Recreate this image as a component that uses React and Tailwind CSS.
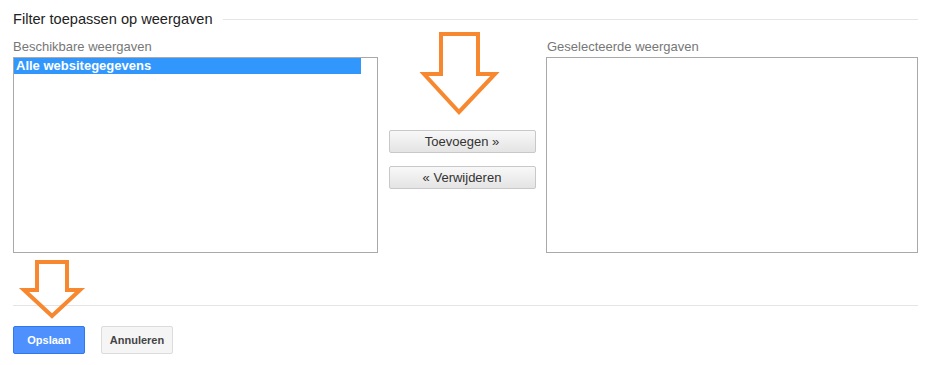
import React from 'react';

const font = { fontFamily: '"Liberation Sans", Arial, sans-serif' };

const Arrow = ({ x1, x2, top, headY, hx1, hx2, tipX, tipY }) => (
  <polygon
    points={`${x1},${top} ${x2},${top} ${x2},${headY} ${hx2},${headY} ${tipX},${tipY} ${hx1},${headY} ${x1},${headY}`}
    fill="none"
    stroke="#f7882f"
    strokeWidth="4"
    strokeLinejoin="miter"
  />
);

const GrayButton = ({ children }) => (
  <button className="w-[147px] h-[23px] rounded-[2px] border border-[#c8c8c8] bg-gradient-to-b from-[#f8f8f8] to-[#e4e4e4] text-[13px] text-[#333] leading-none">
    {children}
  </button>
);

export default function App() {
  return (
    <div className="relative w-[937px] h-[365px] bg-white pt-[10px] pl-[13px] pr-[19px]" style={font}>
      {/* titel */}
      <div className="flex items-center h-[18px]">
        <span className="text-[14.6px] leading-[18px] text-[#222]">Filter toepassen op weergaven</span>
        <div className="flex-1 h-px bg-[#e5e5e5] ml-[10px]" />
      </div>

      <div className="flex mt-[11px]">
        <div className="w-[365px]">
          <div className="h-[16px] leading-[16px] text-[13px] text-[#777] mb-[2px]">Beschikbare weergaven</div>
          <div className="h-[196px] border border-[#a9a9a9] bg-white">
            <div className="w-[347px] h-[16px] leading-[16px] bg-[#3297fd] text-white text-[13px] font-bold px-[2px]">
              Alle websitegegevens
            </div>
          </div>
        </div>

        <div className="w-[168px] flex flex-col items-center pt-[91px] gap-[13px]">
          <GrayButton>Toevoegen »</GrayButton>
          <GrayButton>« Verwijderen</GrayButton>
        </div>

        <div className="flex-1">
          <div className="h-[16px] leading-[16px] text-[13px] text-[#777] mb-[2px] pl-[1px]">Geselecteerde weergaven</div>
          <div className="h-[196px] border border-[#a9a9a9] bg-white" />
        </div>
      </div>

      <div className="h-px bg-[#e5e5e5] mt-[52px]" />

      <div className="flex gap-[16px] mt-[20px]">
        <button className="w-[72px] h-[28px] rounded-[2px] border border-[#3079ed] bg-[#4d90fe] text-white text-[11px] font-bold">
          Opslaan
        </button>
        <button className="w-[72px] h-[28px] rounded-[2px] border border-[#dcdcdc] bg-[#f5f5f5] text-[#444] text-[11px] font-bold">
          Annuleren
        </button>
      </div>

      <svg className="absolute inset-0 pointer-events-none" width="937" height="365">
        <Arrow x1={441} x2={478} top={34} headY={74} hx1={424} hx2={495} tipX={459} tipY={112} />
        <Arrow x1={37} x2={67} top={262} headY={290} hx1={24} hx2={80} tipX={52} tipY={316} />
      </svg>
    </div>
  );
}
